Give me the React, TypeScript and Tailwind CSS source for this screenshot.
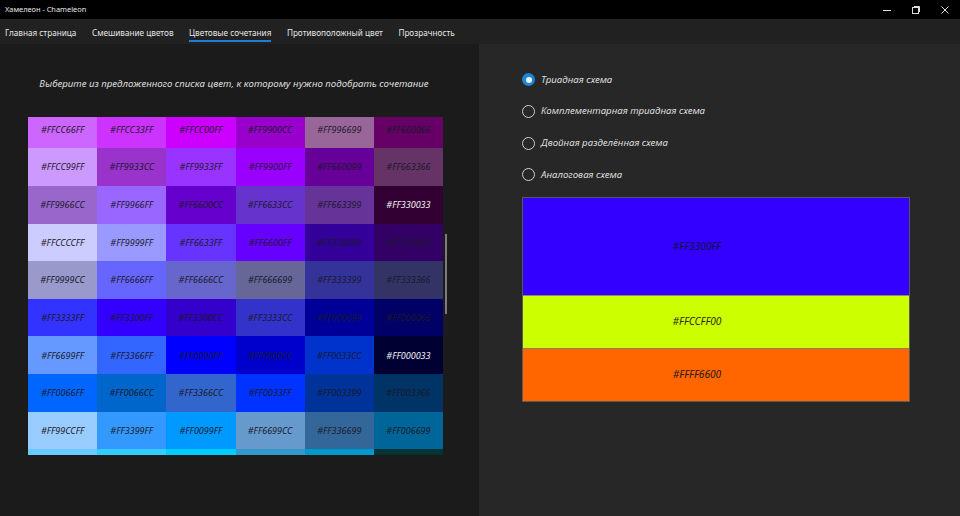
import React from "react";

const rows: string[][] = [
  ["CC66FF", "CC33FF", "CC00FF", "9900CC", "996699", "660066"],
  ["CC99FF", "9933CC", "9933FF", "9900FF", "660099", "663366"],
  ["9966CC", "9966FF", "6600CC", "6633CC", "663399", "330033"],
  ["CCCCFF", "9999FF", "6633FF", "6600FF", "330099", "330066"],
  ["9999CC", "6666FF", "6666CC", "666699", "333399", "333366"],
  ["3333FF", "3300FF", "3300CC", "3333CC", "000099", "000066"],
  ["6699FF", "3366FF", "0000FF", "0000CC", "0033CC", "000033"],
  ["0066FF", "0066CC", "3366CC", "0033FF", "003399", "003366"],
  ["99CCFF", "3399FF", "0099FF", "6699CC", "336699", "006699"],
  ["66CCFF", "33CCFF", "00CCFF", "3399CC", "0099CC", "003333"],
];

const whiteText = new Set(["330033", "000033"]);

const font = { fontFamily: '"Noto Sans", "Open Sans", sans-serif' };

function Radio({ label, checked }: { label: string; checked?: boolean }) {
  return (
    <div className="flex items-center h-[31.7px]">
      {checked ? (
        <div className="w-[13px] h-[13px] rounded-full bg-[#1a86d8] flex items-center justify-center">
          <div className="w-[6px] h-[6px] rounded-full bg-[#f0f0f0]" />
        </div>
      ) : (
        <div className="w-[13px] h-[13px] rounded-full border-[1.5px] border-[#cfcfcf]" />
      )}
      <span className="ml-[6px] text-[9.7px] italic text-[#dcdcdc]">{label}</span>
    </div>
  );
}

export default function App() {
  const tabs = [
    "Главная страница",
    "Смешивание цветов",
    "Цветовые сочетания",
    "Противоположный цвет",
    "Прозрачность",
  ];
  return (
    <div className="w-[960px] h-[516px] flex flex-col overflow-hidden bg-[#1c1b1c]" style={font}>
      {/* Title bar */}
      <div className="h-[19px] bg-black flex items-center text-white">
        <span className="ml-[5px] text-[7.4px] text-[#e8e8e8]">Хамелеон - Chameleon</span>
        <div className="ml-auto flex items-center h-full">
          <div className="w-[29px] h-full flex items-center justify-center">
            <svg width="10" height="10" viewBox="0 0 10 10">
              <line x1="1" y1="5.5" x2="9" y2="5.5" stroke="#ddd" strokeWidth="1" />
            </svg>
          </div>
          <div className="w-[29px] h-full flex items-center justify-center">
            <svg width="10" height="10" viewBox="0 0 10 10">
              <rect x="1.5" y="2.5" width="6" height="6" fill="none" stroke="#ddd" strokeWidth="1" />
              <path d="M3 1.5 H8.5 V7" fill="none" stroke="#ddd" strokeWidth="1" />
            </svg>
          </div>
          <div className="w-[29px] h-full flex items-center justify-center mr-[1px]">
            <svg width="10" height="10" viewBox="0 0 10 10">
              <path d="M1.5 1.5 L8.5 8.5 M8.5 1.5 L1.5 8.5" stroke="#ddd" strokeWidth="1" />
            </svg>
          </div>
        </div>
      </div>
      {/* Tab bar */}
      <div className="h-[25px] bg-[#212121] flex items-stretch pl-[5px] gap-[15.5px]">
        {tabs.map((t, i) => (
          <div key={t} className="relative flex items-center pt-[3px] text-[8.2px] text-[#e6e6e6]">
            <span>{t}</span>
            {i === 2 && (
              <div className="absolute left-0 right-0 top-[21px] h-[2px] bg-[#1d7fd3]" />
            )}
          </div>
        ))}
      </div>
      {/* Content */}
      <div className="flex-1 flex">
        {/* Left pane */}
        <div className="w-[479px] bg-[#1c1b1c] flex flex-col">
          <div className="h-[73px] flex items-center justify-center pt-[7px] pr-[11px]">
            <span className="text-[9.7px] italic text-[#dedede] whitespace-nowrap">
              Выберите из предложенного списка цвет, к которому нужно подобрать сочетание
            </span>
          </div>
          <div className="relative ml-[28px] w-[420px] h-[338px] overflow-hidden">
            <div className="w-[415px] mt-[-6.3px] flex flex-col">
              {rows.map((r, ri) => (
                <div key={ri} className="flex h-[37.625px]">
                  {r.map((c) => (
                    <div
                      key={c}
                      className="flex-1 flex items-center justify-center text-[9px] italic"
                      style={{
                        backgroundColor: `#${c}`,
                        color: whiteText.has(c) ? "#f4f4f4" : "#1a1a2a",
                      }}
                    >
                      {ri < 9 ? `#FF${c}` : ""}
                    </div>
                  ))}
                </div>
              ))}
            </div>
            <div className="absolute left-[417px] top-[117px] w-[2px] h-[80px] bg-[#7c7c7c]" />
          </div>
        </div>
        {/* Right pane */}
        <div className="flex-1 bg-[#272727] pl-[43px] pt-[19px]">
          <div className="mt-[1px]">
            <Radio label="Триадная схема" checked />
            <Radio label="Комплементарная триадная схема" />
            <Radio label="Двойная разделённая схема" />
            <Radio label="Аналоговая схема" />
          </div>
          <div className="mt-[6px] w-[388px] flex flex-col border border-[#5a5a5a]">
            <div className="h-[97px] bg-[#3300FF] flex items-center justify-center pr-[38px] text-[10.2px] italic text-[#10103a]">
              #FF3300FF
            </div>
            <div className="h-[53px] bg-[#CCFF00] border-t border-[#8a8a6a] flex items-center justify-center pr-[38px] text-[10.2px] italic text-[#2a2a10]">
              #FFCCFF00
            </div>
            <div className="h-[53px] bg-[#FF6600] border-t border-[#9a7a5a] flex items-center justify-center pr-[38px] text-[10.2px] italic text-[#2a1a10]">
              #FFFF6600
            </div>
          </div>
        </div>
      </div>
    </div>
  );
}
